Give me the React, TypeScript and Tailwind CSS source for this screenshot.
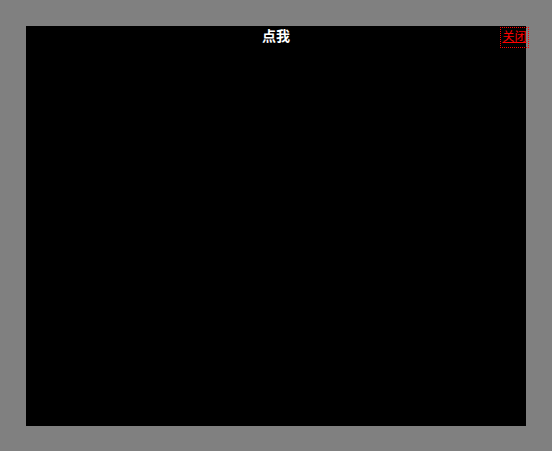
import React from "react";

const App = () => {
  return (
    <div className="w-[552px] h-[451px] bg-[#808080] pt-[26px] pl-[26px] font-['Noto_Sans_CJK_SC',sans-serif]">
      {/* Dialog */}
      <div className="relative w-[500px] h-[400px] bg-black">
        <div className="flex justify-center">
          <span className="text-white font-bold text-[14px] leading-[18px]">点我</span>
        </div>
        <a
          href="#"
          className="absolute right-[-3px] top-[1px] w-[29px] h-[21px] flex items-center justify-center pb-[3px] border border-dotted border-[#ff0000] text-[12px] leading-[16px] text-[#ff0000] underline"
        >
          关闭
        </a>
      </div>
    </div>
  );
};

export default App;
